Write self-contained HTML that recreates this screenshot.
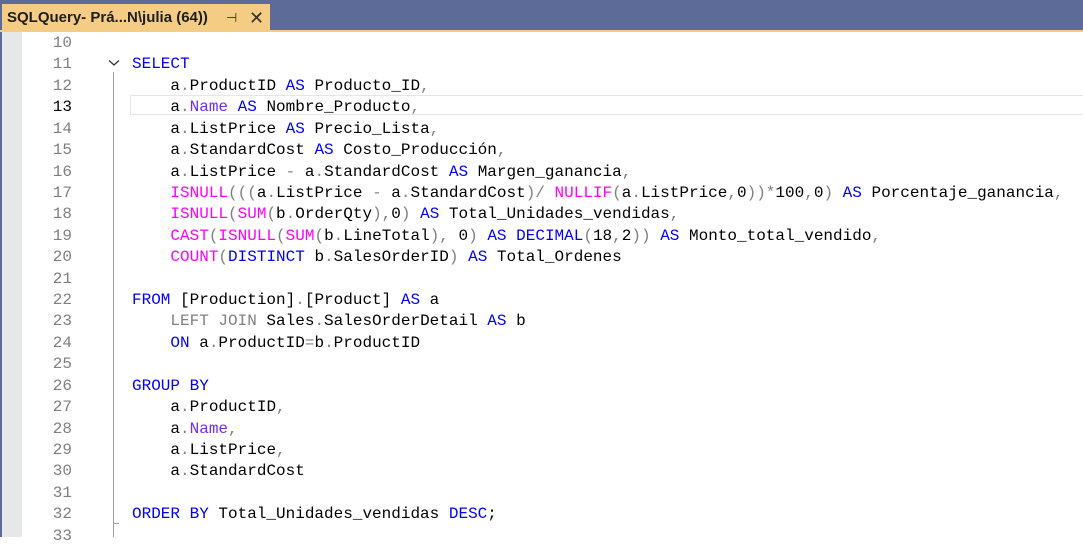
<!DOCTYPE html>
<html><head><meta charset="utf-8"><style>
body{margin:0;width:1083px;height:537px;overflow:hidden;background:#fff;position:relative;font-family:"Liberation Sans",sans-serif}
.bar{position:absolute;left:0;top:0;width:1083px;height:30px;background:#5d6b99}
.ol{position:absolute;left:0;top:30px;width:1083px;height:2px;background:#f5cc84}
.tab{position:absolute;left:2px;top:4px;width:268px;height:28px;background:#f5cc84;font-size:15px;font-weight:bold;color:#1e1e1e;line-height:28px}
.tab span{position:absolute;left:5px}
.lb{position:absolute;left:0;top:32px;width:2px;height:505px;background:#5d6b99}
.gut{position:absolute;left:2px;top:32px;width:20px;height:505px;background:#e6e7e8}
.code{position:absolute;left:0;top:33px;width:1083px;font-family:"Liberation Mono",monospace;font-size:16px;line-height:21.43px;color:#000}
.n{position:absolute;left:0;width:72px;text-align:right;color:#808080}
.cur{color:#000}
.l{height:21.43px;position:relative}
.t{position:absolute;left:132px;top:0;white-space:pre}
.k{color:#0000ff}.f{color:#ff00ff}.g{color:#808080}.p{color:#6f2cff}
.vl{position:absolute;left:113px;top:72px;width:1px;height:465px;background:#a0a0a0}
.tick{position:absolute;left:113px;top:523px;width:6px;height:1px;background:#a0a0a0}
.hl{position:absolute;left:130px;top:95px;width:953px;height:20px;border:1px solid #e4e4ec;border-right:none;box-sizing:border-box}
</style></head><body>
<div class="bar"></div><div class="ol"></div>
<div class="tab"><span>SQLQuery- Prá...N\julia (64))</span><span style="left:224px;font-weight:normal;color:#333;font-size:13px">⊣</span><span style="left:247px;font-weight:normal;color:#333;font-size:18px">✕</span></div>
<div class="lb"></div><div class="gut"></div>
<div class="hl"></div>
<div class="vl"></div><div class="tick"></div>
<svg style="position:absolute;left:108px;top:59px" width="12" height="8"><path d="M1 1.5 L6 6 L11 1.5" fill="none" stroke="#333" stroke-width="1.3"/></svg>
<div class="code">
<div class="l"><span class="n">10</span></div>
<div class="l"><span class="n">11</span><span class="t"><span class="k">SELECT</span></span></div>
<div class="l"><span class="n">12</span><span class="t">    a<span class="g">.</span>ProductID <span class="k">AS</span> Producto_ID<span class="g">,</span></span></div>
<div class="l"><span class="n cur">13</span><span class="t">    a<span class="g">.</span><span class="p">Name</span> <span class="k">AS</span> Nombre_Producto<span class="g">,</span></span></div>
<div class="l"><span class="n">14</span><span class="t">    a<span class="g">.</span>ListPrice <span class="k">AS</span> Precio_Lista<span class="g">,</span></span></div>
<div class="l"><span class="n">15</span><span class="t">    a<span class="g">.</span>StandardCost <span class="k">AS</span> Costo_Producción<span class="g">,</span></span></div>
<div class="l"><span class="n">16</span><span class="t">    a<span class="g">.</span>ListPrice <span class="g">-</span> a<span class="g">.</span>StandardCost <span class="k">AS</span> Margen_ganancia<span class="g">,</span></span></div>
<div class="l"><span class="n">17</span><span class="t">    <span class="f">ISNULL</span><span class="g">(((</span>a<span class="g">.</span>ListPrice <span class="g">-</span> a<span class="g">.</span>StandardCost<span class="g">)/</span> <span class="f">NULLIF</span><span class="g">(</span>a<span class="g">.</span>ListPrice<span class="g">,</span>0<span class="g">))*</span>100<span class="g">,</span>0<span class="g">)</span> <span class="k">AS</span> Porcentaje_ganancia<span class="g">,</span></span></div>
<div class="l"><span class="n">18</span><span class="t">    <span class="f">ISNULL</span><span class="g">(</span><span class="f">SUM</span><span class="g">(</span>b<span class="g">.</span>OrderQty<span class="g">),</span>0<span class="g">)</span> <span class="k">AS</span> Total_Unidades_vendidas<span class="g">,</span></span></div>
<div class="l"><span class="n">19</span><span class="t">    <span class="f">CAST</span><span class="g">(</span><span class="f">ISNULL</span><span class="g">(</span><span class="f">SUM</span><span class="g">(</span>b<span class="g">.</span>LineTotal<span class="g">),</span> 0<span class="g">)</span> <span class="k">AS DECIMAL</span><span class="g">(</span>18<span class="g">,</span>2<span class="g">))</span> <span class="k">AS</span> Monto_total_vendido<span class="g">,</span></span></div>
<div class="l"><span class="n">20</span><span class="t">    <span class="f">COUNT</span><span class="g">(</span><span class="k">DISTINCT</span> b<span class="g">.</span>SalesOrderID<span class="g">)</span> <span class="k">AS</span> Total_Ordenes</span></div>
<div class="l"><span class="n">21</span></div>
<div class="l"><span class="n">22</span><span class="t"><span class="k">FROM</span> [Production]<span class="g">.</span>[Product] <span class="k">AS</span> a</span></div>
<div class="l"><span class="n">23</span><span class="t">    <span class="g">LEFT JOIN</span> Sales<span class="g">.</span>SalesOrderDetail <span class="k">AS</span> b</span></div>
<div class="l"><span class="n">24</span><span class="t">    <span class="k">ON</span> a<span class="g">.</span>ProductID<span class="g">=</span>b<span class="g">.</span>ProductID</span></div>
<div class="l"><span class="n">25</span></div>
<div class="l"><span class="n">26</span><span class="t"><span class="k">GROUP BY</span></span></div>
<div class="l"><span class="n">27</span><span class="t">    a<span class="g">.</span>ProductID<span class="g">,</span></span></div>
<div class="l"><span class="n">28</span><span class="t">    a<span class="g">.</span><span class="p">Name</span><span class="g">,</span></span></div>
<div class="l"><span class="n">29</span><span class="t">    a<span class="g">.</span>ListPrice<span class="g">,</span></span></div>
<div class="l"><span class="n">30</span><span class="t">    a<span class="g">.</span>StandardCost</span></div>
<div class="l"><span class="n">31</span></div>
<div class="l"><span class="n">32</span><span class="t"><span class="k">ORDER BY</span> Total_Unidades_vendidas <span class="k">DESC</span>;</span></div>
<div class="l"><span class="n">33</span></div>
</div>
</body></html>
